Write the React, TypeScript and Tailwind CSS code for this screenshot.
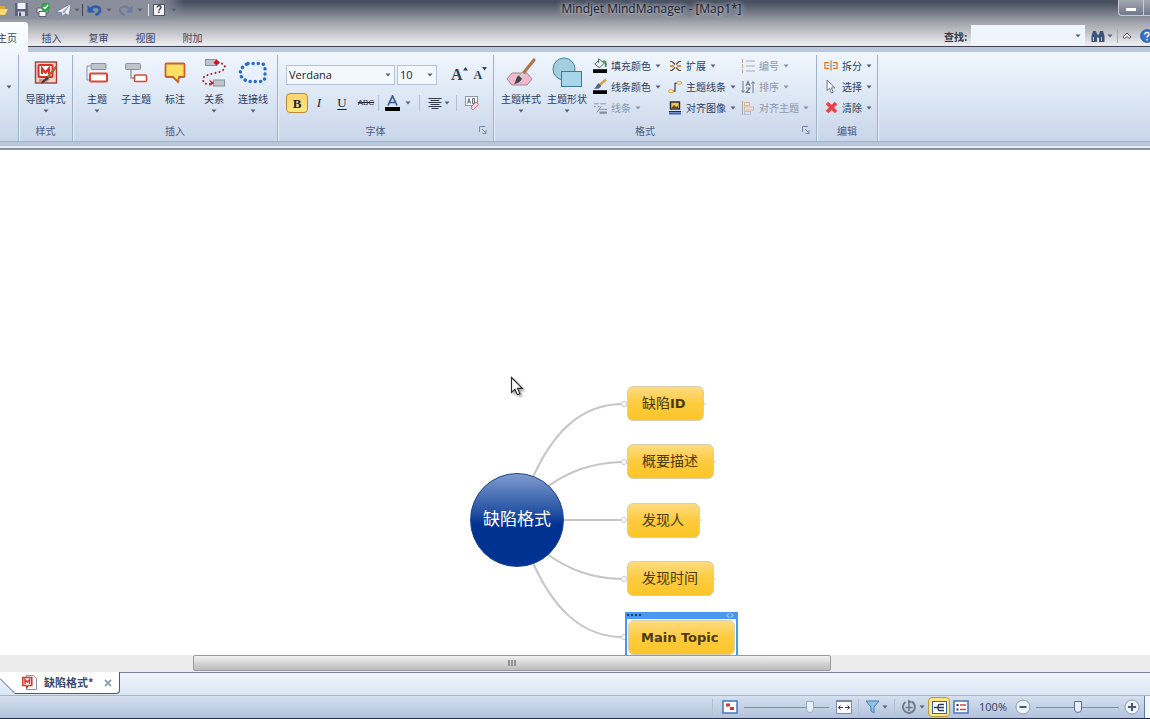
import { useState, type ReactNode } from 'react'
import clsx from 'clsx'

const ribbonTabs = ['插入', '复审', '视图', '附加']

const topics = [
  { id: 1, label: '缺陷', bold: 'ID', top: 'top-[236px]', width: 'w-[77px]' },
  { id: 2, label: '概要描述', bold: '', top: 'top-[294px]', width: 'w-[87px]' },
  { id: 3, label: '发现人', bold: '', top: 'top-[353px]', width: 'w-[73px]' },
  { id: 4, label: '发现时间', bold: '', top: 'top-[411px]', width: 'w-[87px]' },
]

const Caret = ({ muted = false }: { muted?: boolean }) => (
  <svg width="6" height="4" viewBox="0 0 6 4" className="shrink-0">
    <path d="M0.5 0.5h5L3 3.5z" fill={muted ? '#8791a3' : '#56607a'} />
  </svg>
)

const Divider = () => <span className="h-4 w-px shrink-0 bg-[#b3c0d4]" />

function Group({ label, launcher, className, children }: { label: string; launcher?: boolean; className?: string; children?: ReactNode }) {
  return (
    <section className={clsx('flex shrink-0 flex-col border-r border-[#9fb0ca] shadow-[1px_0_0_#eaf1fa]', className)}>
      <div className="flex h-[65px]">{children}</div>
      <div className="flex h-5 items-center">
        <span className="flex-1 text-center text-[#4b5a80]">{label}</span>
        {launcher && (
          <button aria-label={`${label}选项`} className="flex w-5 justify-center">
            <svg width="8" height="8" viewBox="0 0 8 8" fill="none" stroke="#7687a5">
              <path d="M0.5 6V0.5H6M3 3l3.5 3.5M7 4v3.5H3.5" />
            </svg>
          </button>
        )}
      </div>
    </section>
  )
}

function BigButton({ label, icon, width = 'w-[39px]', caret = true }: { label: string; icon: ReactNode; width?: string; caret?: boolean }) {
  return (
    <button className={clsx('flex shrink-0 flex-col items-center whitespace-nowrap pt-0.5', width)}>
      <span className="flex h-8 items-center justify-center">{icon}</span>
      <span className="h-5 leading-5">{label}</span>
      {caret && <Caret />}
    </button>
  )
}

function SmallButton({ label, icon, disabled = false }: { label: string; icon: ReactNode; disabled?: boolean }) {
  return (
    <button disabled={disabled} className={clsx('flex h-[21px] items-center gap-1 whitespace-nowrap', disabled && 'text-[#8d97a8]')}>
      <span className="flex w-3.5 shrink-0 justify-center">{icon}</span>
      <span>{label}</span>
      <Caret muted={disabled} />
    </button>
  )
}

/* ---------- 图标 ---------- */

const MapStyleIcon = () => (
  <svg width="26" height="26" viewBox="0 0 26 26" fill="none">
    <rect x="2.5" y="2" width="21" height="21" fill="#f3d3c8" stroke="#9c4339" strokeWidth="1.4" />
    <rect x="5.5" y="5" width="14" height="12" rx="1" fill="#fff" stroke="#dc2f25" strokeWidth="2" />
    <path d="M9 14V8.5l3.500 4 3.500-4V14" stroke="#dc2f25" strokeWidth="2.2" />
    <path d="M6 19h11l-3 3H6z" fill="#d98f7c" />
    <path d="M23.500 6.500L14 18" stroke="#a5673a" strokeWidth="2.4" />
    <path d="M14 16.500l2 2-6 4.500-2 .5 1-2z" fill="#3c3c42" />
  </svg>
)

const TopicIcon = () => (
  <svg width="24" height="24" viewBox="0 0 24 24" fill="none">
    <path d="M5 5H2v14h3" stroke="#8d9199" />
    <rect x="6" y="2.5" width="15" height="6" rx="1" fill="#bfc3ca" stroke="#8b8f98" />
    <rect x="5" y="12.5" width="17" height="8" rx="1" fill="#fff" stroke="#d94a35" strokeWidth="2" />
  </svg>
)

const SubtopicIcon = () => (
  <svg width="24" height="24" viewBox="0 0 24 24" fill="none">
    <path d="M7 9v8h4" stroke="#8d9199" strokeWidth="1.3" />
    <rect x="1.5" y="2.5" width="15" height="6" rx="1" fill="#bfc3ca" stroke="#8b8f98" />
    <rect x="10.5" y="14" width="12" height="6.5" rx="1" fill="#fff" stroke="#d94a35" strokeWidth="1.6" />
  </svg>
)

const CalloutIcon = () => (
  <svg width="24" height="24" viewBox="0 0 24 24">
    <path d="M3.5 2.5h17a1 1 0 011 1V15a1 1 0 01-1 1H16l-1 5-5-5H3.5a1 1 0 01-1-1V3.500a1 1 0 011-1z" fill="#fddf63" stroke="#c9612b" strokeWidth="1.8" />
  </svg>
)

const RelationIcon = () => (
  <svg width="26" height="30" viewBox="0 0 26 30" fill="none">
    <rect x="4.500" y="1.500" width="11" height="6" fill="#c0c4cb" stroke="#8b8f98" />
    <rect x="12.500" y="22" width="11" height="6" fill="#c0c4cb" stroke="#8b8f98" />
    <path d="M17 4.500C27 6 25 12 18 14S1 17 2 22s5 4 7 4" stroke="#c4161c" strokeWidth="2" strokeLinecap="round" strokeDasharray="0.1 4" />
    <path d="M12.500 4.500l3-3 3.500 3-3.500 3zM8 21.500l5 3.500-5 3.500 2-3.500z" fill="#c4161c" />
  </svg>
)

const BoundaryIcon = () => (
  <svg width="30" height="24" viewBox="0 0 30 24">
    <path d="M10 2.500h12c4 0 5 2 5 5v8c0 4-2 5-6 5H12C0 19 -1 7 10 2.500z" fill="#e6f1fb" stroke="#2b69c6" strokeWidth="3.4" strokeLinecap="round" strokeDasharray="0.1 5" />
  </svg>
)

const TopicStyleIcon = () => (
  <svg width="32" height="30" viewBox="0 0 32 30" fill="none">
    <path d="M7 15h15l5 6-5 6H7l-5-6z" fill="#f1b9cb" stroke="#9b8a9e" />
    <path d="M29 2L16 18" stroke="#b5754c" strokeWidth="3.200" strokeLinecap="round" />
    <path d="M18.500 15.500L15 20" stroke="#cfd3da" strokeWidth="3.500" />
    <path d="M13.500 17.500l3.500 3c-1 3-4 5-8 5.500 2-2 2-7 4.500-8.500z" fill="#3f4450" />
  </svg>
)

const TopicShapeIcon = () => (
  <svg width="32" height="32" viewBox="0 0 32 32">
    <circle cx="13" cy="12" r="11" fill="#a5cde0" stroke="#49849f" />
    <rect x="10.500" y="14.500" width="20" height="15" fill="#a6d6ea" stroke="#3c7b97" />
  </svg>
)

const FillColorIcon = () => (
  <svg width="15" height="17" viewBox="0 0 15 17" fill="none">
    <path d="M2 7l5-5 5 4-5 5z" fill="#eef4f5" stroke="#3f5a60" />
    <path d="M6 1v5" stroke="#3f5a60" />
    <path d="M11 4c3 0 3 3 2.500 6" stroke="#3d8a3c" strokeWidth="2" />
    <path d="M0 12.500h15v4H0z" fill="#000" />
  </svg>
)

const LineColorIcon = () => (
  <svg width="15" height="17" viewBox="0 0 15 17" fill="none">
    <path d="M14 1L7 7" stroke="#d2a03a" strokeWidth="2.500" />
    <path d="M6 5l3 3-3 3H1c2-1 3-5 5-6z" fill="#56618c" />
    <path d="M0 12.500h15v4H0z" fill="#000" />
  </svg>
)

const LineIcon = () => (
  <svg width="15" height="14" viewBox="0 0 15 14" stroke="#858d9b" fill="none">
    <path d="M1 2.500h5M8 2.500h6M1 5.500h2M5 5.500h2M4 12l5-7M7 8.500h8" />
    <path d="M7 12h8" strokeWidth="2.500" />
  </svg>
)

const ExpandIcon = () => (
  <svg width="13" height="12" viewBox="0 0 13 12" fill="none">
    <path d="M1 1.500h2l3 3M12 1.500h-2l-3 3M1 10.500h2l3-3M12 10.500h-2l-3-3" stroke="#5a4338" strokeWidth="1.200" />
    <path d="M1 6h4M8 6h4" stroke="#e98a2a" strokeWidth="2" />
  </svg>
)

const TopicLineIcon = () => (
  <svg width="15" height="14" viewBox="0 0 15 14" fill="none">
    <path d="M5 11.500h2.500V3H10" stroke="#3c3f63" strokeWidth="1.300" />
    <rect x="0.700" y="10" width="5" height="3" rx="1.500" fill="#fff3c9" stroke="#d9992b" />
    <rect x="9.500" y="1" width="5" height="3" rx="1.500" fill="#fff3c9" stroke="#d9992b" />
  </svg>
)

const AlignImageIcon = () => (
  <svg width="14" height="14" viewBox="0 0 14 14">
    <rect x="2.500" y="1" width="9" height="7" fill="#e9c25c" stroke="#26262c" strokeWidth="1.400" />
    <path d="M3.500 7l2.500-3 2 2 1.500-1 1 2z" fill="#5c4a33" />
    <path d="M1 10h12v1.200H1z" fill="#26262c" />
    <path d="M1 11.500h12v2H1z" fill="#3d5ec4" />
  </svg>
)

const NumberingIcon = () => (
  <svg width="14" height="14" viewBox="0 0 14 14" stroke="#a4abb7">
    <path d="M5 2h9M5 7h9M5 12h9" />
    <path d="M1.500 0v4M1.500 5v4M1.500 10v4" stroke="#c7a392" />
  </svg>
)

const SortIcon = () => (
  <svg width="14" height="14" viewBox="0 0 14 14" fill="none" stroke="#6f7886">
    <path d="M2 1v11M0.500 10.500L2 12.500l1.500-2M12 13V2M10.500 3.500L12 1.500l1.500 2" />
    <path d="M5 6l2-4.500L9 6M5.500 4.500h3M5 8h4l-4 4.500h4" strokeWidth="1.200" />
  </svg>
)

const AlignTopicIcon = () => (
  <svg width="14" height="14" viewBox="0 0 14 14" fill="none">
    <path d="M1.500 0v14" stroke="#a4abb7" />
    <rect x="3.500" y="1.500" width="5" height="3" fill="#f7e2cf" stroke="#d9b79a" />
    <rect x="3.500" y="6" width="9" height="3" fill="#f7e2cf" stroke="#d9b79a" />
    <rect x="3.500" y="10.500" width="6" height="3" stroke="#b9bec8" />
  </svg>
)

const SplitIcon = () => (
  <svg width="15" height="11" viewBox="0 0 15 11" fill="none" stroke="#dd7a22" strokeWidth="1.300">
    <path d="M5.500 2.500H1v6h4.500M9.500 2.500H14v6H9.500M3 5.500h3M9 5.500h3" />
    <path d="M7.500 0v11" stroke="#8a6a4a" strokeWidth="1" />
  </svg>
)

const SelectIcon = () => (
  <svg width="12" height="15" viewBox="0 0 12 15">
    <path d="M2 1v10.500l2.500-2.200L6.300 14l1.900-.8-1.900-4.400H10z" fill="#f7f9fc" stroke="#6b7890" />
  </svg>
)

const DeleteIcon = () => (
  <svg width="13" height="13" viewBox="0 0 13 13">
    <path d="M2 2l9 9M11 2l-9 9" stroke="#e5454a" strokeWidth="3.600" />
  </svg>
)

const MapDocIcon = () => (
  <svg width="15" height="15" viewBox="0 0 15 15" fill="none">
    <path d="M4.500 0.500h7l3 3v11h-10z" fill="#fff" stroke="#8c919c" />
    <path d="M0.800 2.500h9v8H6l-1 2-1-2H0.800z" fill="#fff" stroke="#d8352b" strokeWidth="1.500" />
    <path d="M3 9V4.500l2.300 2.700L7.600 4.500V9" stroke="#d8352b" strokeWidth="1.500" />
  </svg>
)

/* ---------- 标题栏 ---------- */

function QuickAccess() {
  return (
    <div className="flex h-[19px] w-[185px] shrink-0 items-center bg-linear-to-r from-[#8b8f9b] from-85% to-transparent">
      <button aria-label="打开" className="w-3.5">
        <svg width="9" height="14" viewBox="0 0 9 14">
          <path d="M0 3h5v8H0z" fill="#d9a83c" />
          <path d="M0 6h8l-3 6H0z" fill="#fbd873" />
        </svg>
      </button>
      <button aria-label="保存" className="w-[22px]">
        <svg width="15" height="15" viewBox="0 0 15 15">
          <path d="M1 1h13v13H1z" fill="#5d6380" />
          <path d="M3.500 1h8v6h-8z" fill="#f1f3f8" />
          <path d="M4 9.500h7V14H4z" fill="#d9dde6" />
          <path d="M5 10.500h2V14H5z" fill="#454b66" />
        </svg>
      </button>
      <button aria-label="打印" className="w-5">
        <svg width="15" height="15" viewBox="0 0 15 15" fill="none">
          <path d="M1 6h11v5H1z" fill="#dfe3ea" stroke="#5a6173" />
          <path d="M3 9.500h7v5H3z" fill="#fff" stroke="#5a6173" />
          <circle cx="9.500" cy="5" r="4.500" fill="#35a245" />
          <path d="M7.500 5l1.500 1.500L12 3" stroke="#fff" strokeWidth="1.500" />
        </svg>
      </button>
      <button aria-label="发送" className="flex w-[26px] items-center gap-0.5">
        <svg width="16" height="14" viewBox="0 0 16 14">
          <path d="M0 9L15 0.500l-2 12-4-2-2.500 3-1-4z" fill="#f3f6fa" stroke="#63708a" strokeWidth="0.700" />
          <path d="M5.500 9.500L15 0.500 8.500 10z" fill="#9ba8bd" />
        </svg>
        <Caret />
      </button>
      <span className="mr-1 h-3 w-px bg-[#3f4554]" />
      <button aria-label="撤销" className="flex w-[31px] items-center gap-1">
        <svg width="15" height="12" viewBox="0 0 15 12" fill="none">
          <path d="M3.500 6c2-5 9.500-4 9.500 0 0 3-2 4-4.500 5" stroke="#2f5cab" strokeWidth="2.600" />
          <path d="M0.500 1v7.500H8z" fill="#2f5cab" />
        </svg>
        <Caret />
      </button>
      <button aria-label="重做" className="flex w-[30px] items-center gap-1">
        <svg width="15" height="12" viewBox="0 0 15 12" fill="none">
          <path d="M11.500 6C9.500 1 2 2 2 6c0 3 2 4 4.500 5" stroke="#6d7c9b" strokeWidth="2" />
          <path d="M14.500 1.500v7H7.500z" fill="#6d7c9b" />
        </svg>
        <Caret />
      </button>
      <span className="mr-1 h-3 w-px bg-[#e8eaef]" />
      <button aria-label="帮助主题" className="flex h-3 w-3 items-center justify-center border border-[#4f5668] bg-[#f4f6f9] font-['Liberation_Sans'] text-[10px] font-bold leading-none text-[#333a4c]">?</button>
      <button aria-label="自定义快速访问工具栏" className="ml-1.5"><Caret /></button>
    </div>
  )
}

function Header() {
  return (
    <header className="relative z-10 flex shrink-0 flex-col border-b border-[#3c4250] bg-linear-to-b from-[#474f61] from-5% via-[#9fa1a9] via-47% to-[#ebe9ee] to-95%">
      <div className="flex h-[22px] items-start">
        <QuickAccess />
        <h1 className="flex-1 truncate text-center font-['Open_Sans',sans-serif] text-[12px] leading-[18px] text-[#1d212b] [text-shadow:0_0_4px_#c9ccd3,0_0_6px_#c9ccd3]">
          Mindjet MindManager - [Map1*]
        </h1>
        <div className="flex w-8 shrink-0 overflow-hidden">
          <button aria-label="最小化" className="flex h-4 w-[26px] shrink-0 items-end justify-center rounded-bl border border-t-0 border-[#c9ccd4] bg-linear-to-b from-[#a3a7b1] to-[#71798a] pb-1">
            <span className="h-[3px] w-2.5 bg-white" />
          </button>
          <button aria-label="最大化" className="h-4 w-[26px] shrink-0 border-b border-[#c9ccd4] bg-linear-to-b from-[#a3a7b1] to-[#71798a]" />
        </div>
      </div>

      <div className="flex h-6 items-center justify-between">
        <nav className="flex h-full items-start text-[#3b4664]">
          <button className="-mb-1.5 -ml-1 h-[30px] w-8 shrink-0 whitespace-nowrap rounded-tr-sm bg-linear-to-b from-white to-[#f0f6fd] pl-px text-left">主页</button>
          {ribbonTabs.map(tab => (
            <button key={tab} className="h-[30px] w-[47px] shrink-0">{tab}</button>
          ))}
        </nav>
        <div className="flex h-full shrink-0 items-center overflow-hidden">
          <label htmlFor="find" className="w-[27px] pt-1 font-bold text-[#333a4a]">查找:</label>
          <div className="flex h-[21px] w-[114px] items-center self-end bg-[#eef5fc] pr-1">
            <input id="find" className="h-full min-w-0 flex-1 bg-transparent px-1 outline-none" />
            <Caret />
          </div>
          <div className="flex items-center pt-1">
            <button aria-label="查找" className="ml-1.5 flex items-center gap-0.5">
              <svg width="14" height="13" viewBox="0 0 14 13">
                <path d="M2 1h3l1 3v8H0.500V6zM12 1H9L8 4v8h5.500V6z" fill="#3d5578" />
                <path d="M5 4.500h4v3H5z" fill="#3d5578" />
                <path d="M2 7h1v4H2zM10 7h1v4h-1z" fill="#a9c0df" />
              </svg>
              <Caret />
            </button>
            <span className="mx-1 h-3.5 w-px bg-[#a7aab3]" />
            <button aria-label="折叠功能区" className="mr-2">
              <svg width="10" height="8" viewBox="0 0 10 8" fill="#fff" stroke="#4a5060">
                <path d="M1 5l4-4 4 4-1.500 1.500L5 4.500 2.500 6.500z" />
              </svg>
            </button>
            <button aria-label="帮助" className="w-2.5 overflow-hidden">
              <svg width="14" height="14" viewBox="0 0 14 14" fill="none" className="max-w-none">
                <circle cx="7" cy="7" r="6.300" fill="#3672cf" stroke="#1f4fa0" />
                <path d="M4.800 5.500c0-3 4.600-2.500 4.200 0C8.800 6.800 7 7 7 8.500M7 10v1.400" stroke="#fff" strokeWidth="1.500" />
              </svg>
            </button>
          </div>
        </div>
      </div>
    </header>
  )
}

/* ---------- 功能区 ---------- */

function FontGroup() {
  const [font, setFont] = useState('Verdana')
  const [size, setSize] = useState('10')
  const [bold, setBold] = useState(true)

  return (
    <Group label="字体" launcher className="w-[216px]">
      <div className="flex flex-col gap-2 pl-2 pt-2.5 font-['Open_Sans',sans-serif]">
        <div className="flex h-5 items-center">
          <div className="relative">
            <select aria-label="字体" value={font} onChange={e => setFont(e.target.value)} className="block h-5 w-[109px] appearance-none border border-[#b4c3d8] bg-[#f3f8fe] pl-0.5 text-[11px] text-[#1c212c] outline-none">
              <option>Verdana</option>
              <option>Arial</option>
            </select>
            <span className="pointer-events-none absolute right-1 top-2"><Caret /></span>
          </div>
          <div className="relative ml-0.5">
            <select aria-label="字号" value={size} onChange={e => setSize(e.target.value)} className="block h-5 w-10 appearance-none border border-[#b4c3d8] bg-[#f3f8fe] pl-0.5 text-[11px] text-[#1c212c] outline-none">
              <option>10</option>
              <option>12</option>
            </select>
            <span className="pointer-events-none absolute right-1 top-2"><Caret /></span>
          </div>
          <button aria-label="增大字体" className="ml-3.5 flex items-start font-['Liberation_Serif'] text-[16px] font-bold leading-5 text-[#2a4157]">
            A<svg width="5" height="4" viewBox="0 0 5 4" className="mt-0.5"><path d="M0 3.500h5L2.500 0z" fill="#2a4157" /></svg>
          </button>
          <button aria-label="减小字体" className="ml-1.5 flex items-start font-['Liberation_Serif'] text-[12px] font-bold leading-5 text-[#2a4157]">
            A<svg width="5" height="4" viewBox="0 0 5 4" className="mt-0.5"><path d="M0 0h5L2.500 3.500z" fill="#2a4157" /></svg>
          </button>
        </div>
        <div className="flex h-5 items-center font-['Liberation_Serif'] text-[13px] text-[#1f2430]">
          <button
            onClick={() => setBold(!bold)}
            className={clsx('h-5 w-[22px] rounded-sm border font-bold leading-none', bold ? 'border-[#b98a3a] bg-linear-to-b from-[#fbd36e] to-[#fee57c]' : 'border-transparent')}
          >
            B
          </button>
          <button className="w-[22px] italic">I</button>
          <button className="w-6 underline underline-offset-2">U</button>
          <button className="w-6 font-['Liberation_Sans'] text-[8px] line-through">ABC</button>
          <Divider />
          <button aria-label="字体颜色" className="ml-1.5 mr-2 flex items-center gap-[5px]">
            <svg width="15" height="17" viewBox="0 0 15 17" fill="none">
              <path d="M3 10.500L7.500 1 12 10.500M4.500 7.500h6" stroke="#345a96" strokeWidth="1.700" />
              <path d="M0 12h15v4H0z" fill="#000" />
            </svg>
            <Caret />
          </button>
          <Divider />
          <button aria-label="对齐" className="ml-2 mr-1.5 flex items-center gap-0.5">
            <svg width="14" height="12" viewBox="0 0 14 12" stroke="#333a48">
              <path d="M0.500 1.500h13M2.500 3.500h9M0.500 5.500h13M2.500 7.500h9M0.500 9.500h13M3.500 11.500h7" />
            </svg>
            <Caret />
          </button>
          <Divider />
          <button aria-label="清除格式" className="ml-[7px]">
            <svg width="16" height="16" viewBox="0 0 16 16" fill="none">
              <rect x="1.500" y="1.500" width="12" height="9" fill="#f5f7fa" stroke="#8f97a6" />
              <path d="M3.500 8.500l1.500-5 1.500 5M4 7h2M8.500 3.500v5h2v-5z" stroke="#69717f" />
              <path d="M7 12l5-5 2.500 2.500-5 5H8z" fill="#f7dbe0" stroke="#cf6f80" />
            </svg>
          </button>
        </div>
      </div>
    </Group>
  )
}

function Ribbon() {
  return (
    <div className="flex shrink-0 flex-col border-t-[5px] border-[#bac7dc]">
      <div className="flex h-[89px] overflow-hidden bg-linear-to-b from-[#f0f6fd] via-[#dfe9f6] via-45% to-[#c9d6ea] pt-[3px] text-[#2f3c5c]">
        <section className="flex w-[19px] shrink-0 justify-center border-r border-[#9fb0ca] pt-[30px] shadow-[1px_0_0_#eaf1fa]"><Caret /></section>

        <Group label="样式" className="w-[54px]">
          <BigButton width="w-full" label="导图样式" icon={<MapStyleIcon />} />
        </Group>

        <Group label="插入" className="w-[205px] [&>div]:justify-center">
          <BigButton label="主题" icon={<TopicIcon />} />
          <BigButton label="子主题" icon={<SubtopicIcon />} caret={false} />
          <BigButton label="标注" icon={<CalloutIcon />} caret={false} />
          <BigButton label="关系" icon={<RelationIcon />} />
          <BigButton label="连接线" icon={<BoundaryIcon />} />
        </Group>

        <FontGroup />

        <Group label="格式" launcher className="w-[323px]">
          <div className="flex pl-1">
            <BigButton width="w-[46px]" label="主题样式" icon={<TopicStyleIcon />} />
            <BigButton width="w-[46px]" label="主题形状" icon={<TopicShapeIcon />} />
          </div>
          <div className="flex w-[76px] flex-col items-start pl-[3px]">
            <SmallButton label="填充颜色" icon={<FillColorIcon />} />
            <SmallButton label="线条颜色" icon={<LineColorIcon />} />
            <SmallButton label="线条" icon={<LineIcon />} disabled />
          </div>
          <div className="flex w-[73px] flex-col items-start pl-0.5">
            <SmallButton label="扩展" icon={<ExpandIcon />} />
            <SmallButton label="主题线条" icon={<TopicLineIcon />} />
            <SmallButton label="对齐图像" icon={<AlignImageIcon />} />
          </div>
          <div className="flex flex-col items-start pl-0.5">
            <SmallButton label="编号" icon={<NumberingIcon />} disabled />
            <SmallButton label="排序" icon={<SortIcon />} disabled />
            <SmallButton label="对齐主题" icon={<AlignTopicIcon />} disabled />
          </div>
        </Group>

        <Group label="编辑" className="w-[61px]">
          <div className="flex flex-col items-start pl-[7px]">
            <SmallButton label="拆分" icon={<SplitIcon />} />
            <SmallButton label="选择" icon={<SelectIcon />} />
            <SmallButton label="清除" icon={<DeleteIcon />} />
          </div>
        </Group>
      </div>
      <div className="h-[5px] border-t border-[#a3b3cd] bg-[#b9c7de]" />
      <div className="h-1 border-b-2 border-[#8b929c] bg-[#e3ebf7]" />
    </div>
  )
}

/* ---------- 导图画布 ---------- */

function MapCanvas() {
  return (
    <main className="relative min-h-0 flex-1 overflow-hidden bg-white font-['DejaVu_Sans','Noto_Sans_CJK_SC',sans-serif] text-[#4a3a12]">
      <svg width="760" height="520" viewBox="0 0 760 520" className="absolute left-0 top-0" fill="none">
        <g stroke="#c6c6c6" strokeWidth="2">
          <path d="M533 327C553 283 580 255 621 254" />
          <path d="M547 337C568 322 590 313 621 312" />
          <path d="M560 370H621" />
          <path d="M547 404C568 419 590 428 621 429" />
          <path d="M533 413C553 457 580 486 621 487" />
        </g>
        <g fill="#fff" stroke="#c6c6c6">
          <circle cx="624" cy="254" r="2.500" />
          <circle cx="624" cy="312" r="2.500" />
          <circle cx="624" cy="370" r="2.500" />
          <circle cx="624" cy="429" r="2.500" />
          <circle cx="624" cy="487" r="2.500" />
        </g>
        <path d="M704 254h2M714 312h2M700 370h2M714 429h2" stroke="#c6c6c6" />
      </svg>

      <div className="absolute left-[470px] top-[323px] flex h-[94px] w-[94px] items-center justify-center rounded-full border border-[#1c438f] bg-linear-to-b from-[#7f9bcd] via-[#2350a3] via-42% to-[#003391] to-55% text-[17px] text-white">
        缺陷格式
      </div>

      {topics.map(t => (
        <div
          key={t.id}
          className={clsx(
            'absolute left-[627px] flex h-[35px] items-center whitespace-nowrap rounded-md border border-[#d8cfae] bg-linear-to-b from-[#fddc7c] via-[#fdcb3d] via-50% to-[#fcc527] pl-3.5 text-[14px]',
            t.top,
            t.width,
          )}
        >
          {t.label}
          {t.bold && <b className="text-[13px]">{t.bold}</b>}
        </div>
      ))}

      {/* 选中的主题 */}
      <div className="absolute left-[625px] top-[462px] w-[113px] border-2 border-t-0 border-[#4798ee] bg-white">
        <div className="flex h-[7px] items-center justify-between bg-[#4798ee] pr-0.5">
          <svg width="16" height="3" viewBox="0 0 16 3" fill="#173a6b"><path d="M0 0h2v2H0zM4 0h2v2H4zM8 0h2v2H8zM12 0h2v2h-2z" /></svg>
          <svg width="8" height="5" viewBox="0 0 8 5" fill="none" stroke="#e4f1ff"><path d="M3 0.500l-2 2 2 2M5 0.500l2 2-2 2" /></svg>
        </div>
        <div className="mx-px mb-1 mt-px flex h-[35px] items-center rounded-md border border-[#d8cfae] bg-linear-to-b from-[#fddc7c] via-[#fdcb3d] via-50% to-[#fcc527] pl-3 text-[13px] font-bold">
          Main Topic
        </div>
      </div>

      <svg width="14" height="22" viewBox="0 0 14 22" className="absolute left-[510px] top-[226px] drop-shadow-[2px_2px_1px_#0005]">
        <path d="M1.500 1.500v15l3.500-3.200 2.300 5.400 2.600-1.100-2.300-5.200h4.700z" fill="#fff" stroke="#2c2c30" strokeWidth="1.200" />
      </svg>
    </main>
  )
}

/* ---------- 底部 ---------- */

const sliderBase =
  'h-4 appearance-none bg-transparent [&::-webkit-slider-runnable-track]:h-px [&::-webkit-slider-runnable-track]:bg-[#7f8da8] [&::-webkit-slider-thumb]:-mt-[6px] [&::-webkit-slider-thumb]:h-3 [&::-webkit-slider-thumb]:w-2 [&::-webkit-slider-thumb]:appearance-none [&::-webkit-slider-thumb]:rounded-b [&::-webkit-slider-thumb]:border [&::-webkit-slider-thumb]:bg-[#e9eff8]'

function StatusBar() {
  const [zoom, setZoom] = useState(50)

  return (
    <footer className="flex h-[23px] shrink-0 items-center justify-end overflow-hidden border-b border-[#1d2a4a] bg-linear-to-b from-[#d5e0f0] to-[#b3c3dc]">
      <Divider />
      <button aria-label="显示全图" className="ml-[9px]">
        <svg width="16" height="14" viewBox="0 0 16 14">
          <rect x="1" y="1" width="14" height="12" fill="#fff" stroke="#4577b5" strokeWidth="1.500" />
          <path d="M4 3.500h4v3H4zM8 7h4v3H8z" fill="#cf3b3b" />
        </svg>
      </button>
      <input type="range" aria-label="详细级别" defaultValue={80} className={clsx(sliderBase, 'ml-1.5 w-[85px] [&::-webkit-slider-thumb]:border-[#9dabc3]')} />
      <button aria-label="适合宽度" className="ml-[7px] mr-1.5">
        <svg width="16" height="14" viewBox="0 0 16 14" fill="none">
          <rect x="0.500" y="0.500" width="15" height="13" fill="#f8fafd" stroke="#7d8aa2" />
          <path d="M1 1.500h14" stroke="#7d8aa2" />
          <path d="M2.500 7.500H7M9 7.500h4.500M4.500 5.500l-2 2 2 2M11.500 5.500l2 2-2 2" stroke="#333b4b" />
        </svg>
      </button>
      <Divider />
      <button aria-label="筛选" className="mx-1.5 flex items-center gap-0.5">
        <svg width="15" height="14" viewBox="0 0 15 14">
          <path d="M1 1h13L9 7v6l-3-2V7z" fill="#8fc4e8" stroke="#3f7fb5" />
        </svg>
        <Caret />
      </button>
      <Divider />
      <button aria-label="刷新" className="ml-1.5 mr-[3px] flex items-center gap-0.5">
        <svg width="16" height="16" viewBox="0 0 16 16" fill="none" stroke="#747b88">
          <path d="M4.500 3a6 6 0 106-0.500" strokeWidth="2" />
          <path d="M8 5v7M4.500 8.500h7" strokeWidth="1.500" />
          <path d="M7 0.500v5L11 3z" fill="#747b88" stroke="none" />
        </svg>
        <Caret />
      </button>
      <button aria-label="导图视图" className="flex h-5 w-[22px] shrink-0 items-center justify-center rounded-sm border border-[#b79c3f] bg-[#fce583]">
        <svg width="15" height="13" viewBox="0 0 15 13" fill="none">
          <rect x="0.500" y="0.500" width="14" height="12" fill="#fff" stroke="#3b5fa8" />
          <path d="M2 6.500h10M12 3.500H7.500q-1.500 0-1.500 3t1.500 3H12" stroke="#26395f" strokeWidth="1.300" />
        </svg>
      </button>
      <button aria-label="大纲视图" className="ml-[3px]">
        <svg width="16" height="14" viewBox="0 0 16 14" fill="none">
          <rect x="1" y="1" width="14" height="12" fill="#fff" stroke="#4577b5" strokeWidth="1.500" />
          <path d="M3.500 5h2M3.500 9.500h2" stroke="#26395f" strokeWidth="2" />
          <path d="M7 5h6M7 9.500h6" stroke="#cf4a4a" strokeWidth="1.300" />
        </svg>
      </button>
      <label htmlFor="zoom" className="ml-2.5 font-['Open_Sans',sans-serif] text-[11px] text-[#33405e]">{zoom * 2}%</label>
      <button aria-label="缩小" onClick={() => setZoom(Math.max(10, zoom - 5))} className="ml-2">
        <svg width="16" height="16" viewBox="0 0 16 16">
          <circle cx="8" cy="8" r="7" fill="#eef3fa" stroke="#8e9cb6" />
          <path d="M4.500 8h7" stroke="#4a5670" strokeWidth="2" />
        </svg>
      </button>
      <input id="zoom" type="range" value={zoom} onChange={e => setZoom(Number(e.target.value))} className={clsx(sliderBase, 'mx-[5px] w-[83px] [&::-webkit-slider-thumb]:border-[#5f6f8f]')} />
      <button aria-label="放大" onClick={() => setZoom(Math.min(100, zoom + 5))}>
        <svg width="16" height="16" viewBox="0 0 16 16">
          <circle cx="8" cy="8" r="7" fill="#eef3fa" stroke="#8e9cb6" />
          <path d="M4 8h8M8 4v8" stroke="#4a5670" strokeWidth="2" />
        </svg>
      </button>
      <span className="ml-1 h-full w-1.5 border-l border-[#5f7dac] bg-[#f3f7fc]" />
    </footer>
  )
}

export default function App() {
  return (
    <div className="flex h-screen flex-col overflow-hidden bg-[#c3d0e4] font-['Noto_Sans_CJK_SC',sans-serif] text-[10px]">
      <Header />
      <Ribbon />
      <MapCanvas />

      {/* 水平滚动条 */}
      <div className="flex h-[17px] shrink-0 bg-[#ececec] pl-[193px] pr-[319px]">
        <div className="flex h-4 flex-1 items-center justify-center rounded-xs border border-[#9a9a9a] bg-linear-to-b from-[#f1f1f1] to-[#bcbcbc]">
          <svg width="8" height="6" viewBox="0 0 8 6" stroke="#555"><path d="M1 0v6M4 0v6M7 0v6" /></svg>
        </div>
      </div>

      {/* 文档标签 */}
      <div className="flex h-6 shrink-0 border-b border-[#a5b4cc] bg-linear-to-b from-[#eff5fd] to-[#dbe6f5]">
        <svg width="15" height="22" viewBox="0 0 15 22" className="shrink-0">
          <path d="M0 0h15v21.500L0 6.500z" fill="#fff" />
          <path d="M0 6.500l15 15" stroke="#4c5a78" />
        </svg>
        <div className="flex h-[22px] w-[105px] shrink-0 items-center rounded-br border-b border-r border-[#4c5a78] bg-white pl-[7px]">
          <MapDocIcon />
          <span className="ml-[7px] text-[11px] font-bold text-[#3b4a70]">缺陷格式*</span>
          <button aria-label="关闭" className="ml-2.5">
            <svg width="8" height="8" viewBox="0 0 8 8"><path d="M1 1l6 6M7 1L1 7" stroke="#8ba0be" strokeWidth="1.800" /></svg>
          </button>
        </div>
        <div className="flex-1 border-t border-[#7785a3]" />
      </div>

      <StatusBar />
    </div>
  )
}
